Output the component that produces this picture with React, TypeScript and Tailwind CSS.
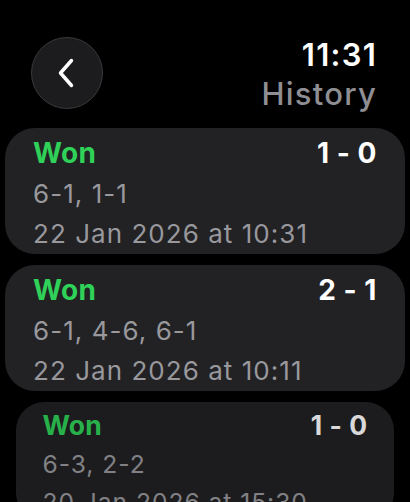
import React from "react";

const matches = [
  { result: "Won", score: "1 - 0", sets: "6-1, 1-1", date: "22 Jan 2026 at 10:31" },
  { result: "Won", score: "2 - 1", sets: "6-1, 4-6, 6-1", date: "22 Jan 2026 at 10:11" },
  { result: "Won", score: "1 - 0", sets: "6-3, 2-2", date: "20 Jan 2026 at 15:30" },
];

const font = { fontFamily: "Inter, 'Noto Sans', sans-serif" };

export default function App() {
  return (
    <div
      className="w-[410px] h-[502px] bg-black overflow-hidden antialiased"
      style={font}
    >
      {/* Header */}
      <div className="flex items-start justify-between pl-[31px] pr-[33px] pt-[37px]">
        <button className="w-[72px] h-[72px] rounded-full bg-[#1c1c1e] border-[1.5px] border-[#3a3a3c] flex items-center justify-center">
          <svg width="22" height="32" viewBox="0 0 22 32" fill="none">
            <path
              d="M15.5 3.5 L4.5 16 L15.5 28.5"
              stroke="white"
              strokeWidth="3.5"
              strokeLinecap="round"
              strokeLinejoin="round"
            />
          </svg>
        </button>
        <div className="flex flex-col items-end">
          <span className="text-white text-[31px] font-semibold leading-[32px] mt-[2px] tracking-[0.04em]">
            11:31
          </span>
          <span className="text-[#8e8e93] text-[31px] font-medium leading-[36px] mt-[5px] tracking-[0.04em]">
            History
          </span>
        </div>
      </div>

      {/* List */}
      <div className="flex flex-col gap-[11px] px-[5px] mt-[16px]">
        {matches.map((m, i) => {
          const last = i === matches.length - 1;
          return (
            <div
              key={i}
              className={`rounded-[30px] bg-[#222224] px-[28px] pt-[4px] origin-top ${
                last ? "scale-[0.945] opacity-85" : ""
              }`}
            >
              <div className="flex items-center justify-between h-[42px]">
                <span className="text-[#30d158] text-[28px] font-bold tracking-[0.01em]">{m.result}</span>
                <span className="text-white text-[28px] font-bold tracking-[0.02em]">{m.score}</span>
              </div>
              <div className="text-[#98989d] text-[26px] leading-[40px] tracking-[0.04em]">{m.sets}</div>
              <div className="text-[#98989d] text-[26px] leading-[40px] tracking-[0.04em]">{m.date}</div>
            </div>
          );
        })}
      </div>
    </div>
  );
}
